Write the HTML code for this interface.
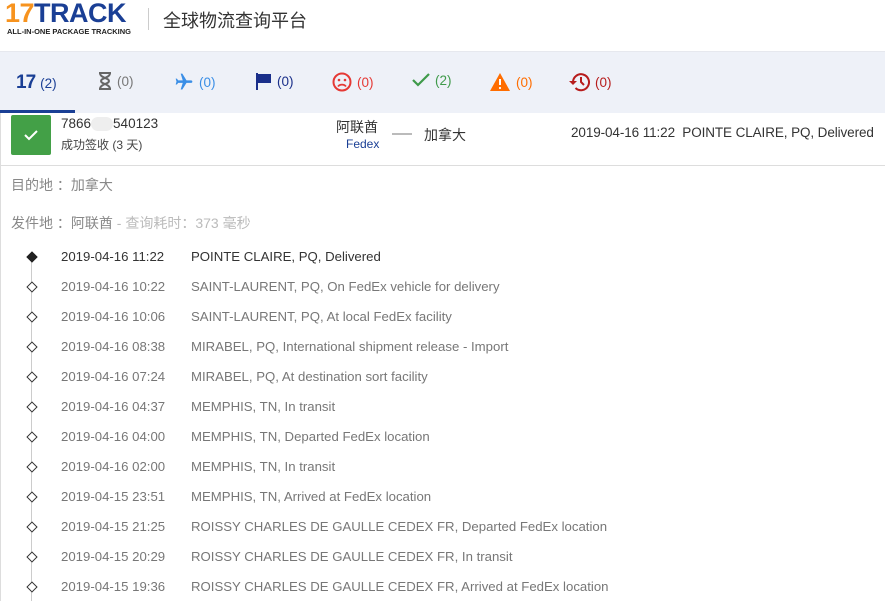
<!DOCTYPE html>
<html><head><meta charset="utf-8"><style>
*{margin:0;padding:0;box-sizing:border-box}
body{width:885px;height:601px;overflow:hidden;background:#fff;font-family:"Liberation Sans","Noto Sans CJK SC",sans-serif;position:relative}
.a{position:absolute;white-space:nowrap}
.hdr{position:absolute;left:0;top:0;width:885px;height:52px;background:#fff;border-bottom:1px solid #e6e8ee}
.tabs{position:absolute;left:0;top:52px;width:885px;height:61px;background:#eef1f8}
.tab{position:absolute;top:20px;font-size:13.5px;display:flex;align-items:center;gap:5px;white-space:nowrap}
.row{position:absolute;left:0;width:885px;height:30px;font-size:13.2px;color:#777;white-space:nowrap}
.row .d{position:absolute;left:61px;top:1px}
.row .t{position:absolute;left:191px;top:1px}
.dia{position:absolute;left:28px;top:5px;width:8px;height:8px;border:1.3px solid #333;transform:rotate(45deg);background:#fff}
</style></head><body>
<div class="hdr">
 <div class="a" style="left:5px;top:0px;font-size:27px;font-weight:900;letter-spacing:-0.5px;line-height:27px"><span style="color:#f7931e">17</span><span style="color:#1a3f95">TRACK</span></div>
 <div class="a" style="left:7px;top:27px;font-size:7.5px;font-weight:bold;color:#222">ALL-IN-ONE PACKAGE TRACKING</div>
 <div class="a" style="left:148px;top:8px;width:1px;height:22px;background:#ccc"></div>
 <div class="a" style="left:163px;top:7px;font-size:18px;color:#333">全球物流查询平台</div>
</div>
<div class="tabs">
 <div class="tab" style="left:16px"><b style="color:#1a3f95;font-size:19px;letter-spacing:-1px">17</b><span style="color:#1a3f95">(2)</span></div>
 <div class="tab" style="left:98px"><svg width="14" height="18" viewBox="0 0 14 18"><path d="M1 1h12M1 17h12M2 1c0 5 9 5 9 8s-9 3-9 8M12 1c0 5-9 5-9 8s9 3 9 8" stroke="#666" stroke-width="2" fill="none"/></svg><span style="color:#777">(0)</span></div>
 <div class="tab" style="left:174px"><svg width="20" height="20" viewBox="0 0 24 24"><path d="M21 16v-2l-8-5V3.5a1.5 1.5 0 0 0-3 0V9l-8 5v2l8-2.5V19l-2 1.5V22l3.5-1 3.5 1v-1.5L13 19v-5.5z" fill="#3a8ee6" transform="rotate(90 12 12)"/></svg><span style="color:#3a8ee6">(0)</span></div>
 <div class="tab" style="left:256px"><svg width="16" height="18" viewBox="0 0 16 18"><path d="M1 1v17" stroke="#1a2f8a" stroke-width="2"/><path d="M2 2h13v9H2z" fill="#1a2f8a"/></svg><span style="color:#1a2f8a">(0)</span></div>
 <div class="tab" style="left:332px"><svg width="20" height="20" viewBox="0 0 20 20"><circle cx="10" cy="10" r="8.5" stroke="#e53935" stroke-width="2" fill="none"/><circle cx="7" cy="8" r="1.3" fill="#e53935"/><circle cx="13" cy="8" r="1.3" fill="#e53935"/><path d="M6 14.5c2-2.5 6-2.5 8 0" stroke="#e53935" stroke-width="1.8" fill="none"/></svg><span style="color:#e53935">(0)</span></div>
 <div class="tab" style="left:412px"><svg width="18" height="16" viewBox="0 0 18 16"><path d="M1 8l5 5L17 2" stroke="#3f9a4a" stroke-width="2.2" fill="none"/></svg><span style="color:#3f9a4a">(2)</span></div>
 <div class="tab" style="left:489px"><svg width="22" height="20" viewBox="0 0 22 20"><path d="M11 1L21 19H1z" fill="#ff6d00"/><path d="M11 7v6" stroke="#fff" stroke-width="2"/><circle cx="11" cy="16" r="1.1" fill="#fff"/></svg><span style="color:#ff6d00">(0)</span></div>
 <div class="tab" style="left:568px"><svg width="22" height="20" viewBox="0 0 22 20"><path d="M5 10a8 8 0 1 1 2.5 6" stroke="#b71c1c" stroke-width="2" fill="none"/><path d="M1 9l4 4 4-4" fill="#b71c1c"/><path d="M13 5v5l3 3" stroke="#b71c1c" stroke-width="2" fill="none"/></svg><span style="color:#b71c1c">(0)</span></div>
 <div class="a" style="left:0;top:58px;width:75px;height:3px;background:#1a3f95"></div>
</div>
<div class="a" style="left:0;top:113px;width:1px;height:488px;background:#ddd"></div>
<div class="a" style="left:11px;top:115px;width:40px;height:40px;background:#43a047;border-radius:2px"><svg width="40" height="40"><path d="M14 20l4 4 8-8" stroke="#fff" stroke-width="2" fill="none"/></svg></div>
<div class="a" style="left:61px;top:116px;font-size:13.5px;color:#333">7866<span style="display:inline-block;width:22px;height:14px;background:#eee;border-radius:7px;vertical-align:middle"></span>540123</div>
<div class="a" style="left:61px;top:136px;font-size:12px;color:#444">成功签收 (3 天)</div>
<div class="a" style="left:336px;top:117px;font-size:14px;color:#333">阿联酋</div>
<div class="a" style="left:346px;top:137px;font-size:12px;color:#1a3f95">Fedex</div>
<div class="a" style="left:392px;top:133px;width:20px;height:2px;background:#bbb"></div>
<div class="a" style="left:424px;top:125px;font-size:14px;color:#333">加拿大</div>
<div class="a" style="left:571px;top:125px;font-size:13.5px;color:#333;letter-spacing:-0.1px">2019-04-16 11:22&nbsp; POINTE CLAIRE, PQ, Delivered</div>
<div class="a" style="left:1px;top:165px;width:884px;height:1px;background:#ddd"></div>
<div class="a" style="left:11px;top:175px;font-size:14px;color:#888">目的地 ：加拿大</div>
<div class="a" style="left:11px;top:213px;font-size:14px;color:#888">发件地 ：阿联酋 <span style="color:#bbb">- 查询耗时：373 毫秒</span></div>
<div class="a" style="left:31px;top:260px;width:1px;height:341px;background:#ccc"></div>
<div class="row" style="top:248px;color:#333"><div class="dia" style="background:#222;border-color:#222"></div><span class="d">2019-04-16 11:22</span><span class="t">POINTE CLAIRE, PQ, Delivered</span></div>
<div class="row" style="top:278px"><div class="dia"></div><span class="d">2019-04-16 10:22</span><span class="t">SAINT-LAURENT, PQ, On FedEx vehicle for delivery</span></div>
<div class="row" style="top:308px"><div class="dia"></div><span class="d">2019-04-16 10:06</span><span class="t">SAINT-LAURENT, PQ, At local FedEx facility</span></div>
<div class="row" style="top:338px"><div class="dia"></div><span class="d">2019-04-16 08:38</span><span class="t">MIRABEL, PQ, International shipment release - Import</span></div>
<div class="row" style="top:368px"><div class="dia"></div><span class="d">2019-04-16 07:24</span><span class="t">MIRABEL, PQ, At destination sort facility</span></div>
<div class="row" style="top:398px"><div class="dia"></div><span class="d">2019-04-16 04:37</span><span class="t">MEMPHIS, TN, In transit</span></div>
<div class="row" style="top:428px"><div class="dia"></div><span class="d">2019-04-16 04:00</span><span class="t">MEMPHIS, TN, Departed FedEx location</span></div>
<div class="row" style="top:458px"><div class="dia"></div><span class="d">2019-04-16 02:00</span><span class="t">MEMPHIS, TN, In transit</span></div>
<div class="row" style="top:488px"><div class="dia"></div><span class="d">2019-04-15 23:51</span><span class="t">MEMPHIS, TN, Arrived at FedEx location</span></div>
<div class="row" style="top:518px"><div class="dia"></div><span class="d">2019-04-15 21:25</span><span class="t">ROISSY CHARLES DE GAULLE CEDEX FR, Departed FedEx location</span></div>
<div class="row" style="top:548px"><div class="dia"></div><span class="d">2019-04-15 20:29</span><span class="t">ROISSY CHARLES DE GAULLE CEDEX FR, In transit</span></div>
<div class="row" style="top:578px"><div class="dia"></div><span class="d">2019-04-15 19:36</span><span class="t">ROISSY CHARLES DE GAULLE CEDEX FR, Arrived at FedEx location</span></div>
</body></html>
